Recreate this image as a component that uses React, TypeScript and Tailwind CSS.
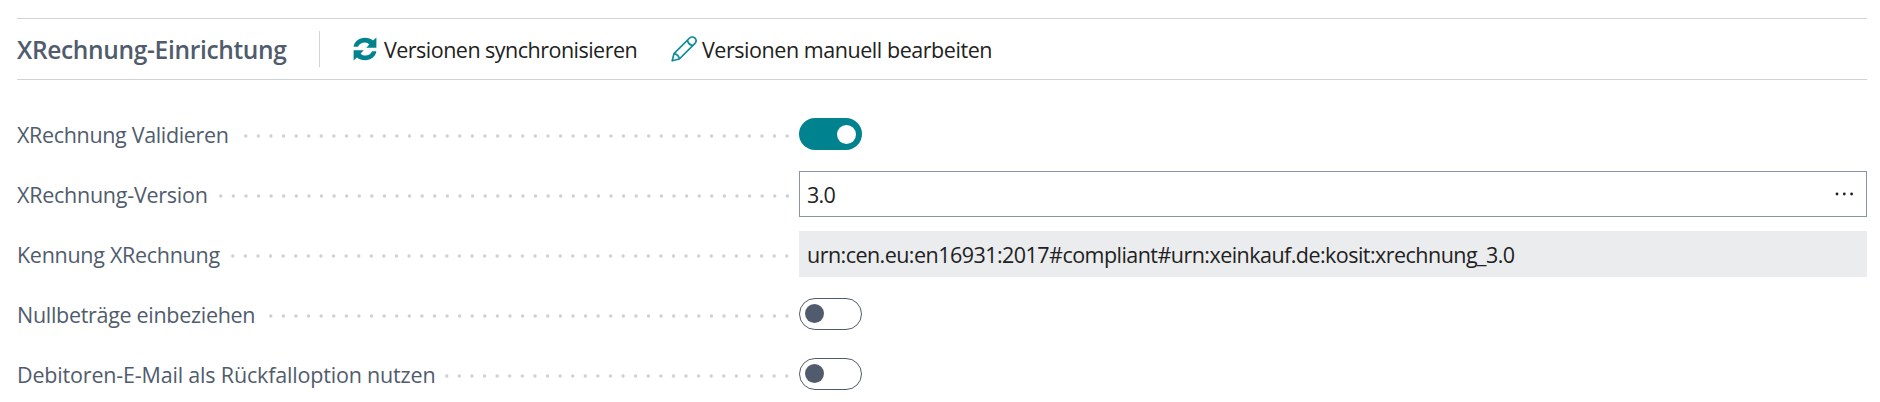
import type { ReactNode } from "react";

function SyncIcon() {
  return (
    <svg className="h-6 w-6 shrink-0" viewBox="0 0 24 24" fill="#00838f">
      <path d="M.6 9.800C1.500 4.300 6 .8 12 .8c3.200 0 5.800.9 8 2.700L23.400.6V10.800H13.200l3.200-3.200C15.200 6.200 13.800 5.400 12 5.400c-3.500 0-6 1.600-7 4.400z" />
      <path d="M23.400 14.200C22.500 19.700 18 23.200 12 23.200c-3.200 0-5.800-.9-8-2.700L.6 23.400V13.200H10.800l-3.200 3.200c1.200 1.400 2.600 2.200 4.400 2.200 3.500 0 6-1.600 7-4.400z" />
    </svg>
  );
}

function PencilIcon() {
  return (
    <svg className="h-[26px] w-[26px] shrink-0" viewBox="0 0 26 26" fill="none" stroke="#0d8c97" strokeWidth="1.7" strokeLinejoin="round">
      <path d="M1.200 24.800 3 17.600 18.600 2C20 .7 22.400.7 23.900 2c1.400 1.500 1.400 3.800.1 5.300L8.300 23z" />
      <path d="M16.400 4.200c.6 2.800 2.500 4.700 5.300 5.300M3 17.600c2.900.4 4.900 2.400 5.300 5.400" />
    </svg>
  );
}

function Toggle({ on = false }: { on?: boolean }) {
  return (
    <button
      role="switch"
      aria-checked={on}
      className={
        on
          ? "flex h-8 w-[63px] items-center justify-end rounded-full bg-[#00838f] pr-1.5"
          : "flex h-8 w-[63px] items-center rounded-full border border-[#505c6d] bg-white pb-px pl-[5px]"
      }
    >
      <span className={on ? "h-[19px] w-[19px] rounded-full bg-white" : "h-[19px] w-[19px] rounded-full bg-[#505c6d]"} />
    </button>
  );
}

function Leader({ count }: { count: number }) {
  return (
    <svg className="mr-[10px] h-1 shrink-0" width={count * 12.59} height="4">
      {Array.from({ length: count }, (_, i) => (
        <circle key={i} cx={count * 12.59 - 1.8 - i * 12.59} cy="2" r="1.7" fill="#cdd0d5" />
      ))}
    </svg>
  );
}

function Row({ label, tracking, dots, children }: { label: string; tracking: string; dots: number; children: ReactNode }) {
  return (
    <div className="flex h-[60px] items-center">
      <div className="flex w-[782px] shrink-0 items-center justify-between">
        <span className={`whitespace-nowrap pt-0.5 text-[21.5px] leading-[30px] text-[#505c6d] ${tracking}`}>{label}</span>
        <div className="pt-1">
          <Leader count={dots} />
        </div>
      </div>
      <div className="flex grow">{children}</div>
    </div>
  );
}

export default function App() {
  return (
    <div className="h-[402px] bg-white pl-[17px] pr-[13px] pt-[18px] font-['Open_Sans','Noto_Sans',sans-serif]">
      <header className="flex h-[62px] items-center border-y border-[#d0d2d6]">
        <h2 className="w-[302px] whitespace-nowrap pt-0.5 text-[24.5px] font-semibold leading-8 tracking-[-0.33px] text-[#505c6d]">
          XRechnung-Einrichtung
        </h2>
        <div className="h-9 w-px bg-[#d0d2d6]" />
        <button className="ml-[33px] flex items-center gap-[7px] text-[21.5px] leading-[30px] text-[#212121]">
          <SyncIcon />
          <span className="w-[254px] whitespace-nowrap pt-0.5 text-left tracking-[-0.52px]">Versionen synchronisieren</span>
        </button>
        <button className="ml-[33px] flex items-center gap-[5px] text-[21.5px] leading-[30px] text-[#212121]">
          <PencilIcon />
          <span className="whitespace-nowrap pt-0.5 tracking-[-0.45px]">Versionen manuell bearbeiten</span>
        </button>
      </header>
      <main className="pt-6">
        <Row label="XRechnung Validieren" tracking="tracking-[-0.34px]" dots={44}>
          <Toggle on />
        </Row>
        <Row label="XRechnung-Version" tracking="tracking-[-0.25px]" dots={46}>
          <div className="flex h-[46px] grow items-center justify-between border border-[#8b94a3] pl-[7px] pr-[13px] text-[21.5px] text-[#212121]">
            <span className="pt-0.5 tracking-[-0.7px]">3.0</span>
            <svg width="18" height="4" fill="#212121">
              <circle cx="2" cy="2" r="1.400" />
              <circle cx="9.300" cy="2" r="1.400" />
              <circle cx="16.600" cy="2" r="1.400" />
            </svg>
          </div>
        </Row>
        <Row label="Kennung XRechnung" tracking="tracking-[-0.29px]" dots={45}>
          <div className="flex h-[46px] grow items-center bg-[#ebecee] pl-2 text-[21.5px] text-[#212121]">
            <span className="whitespace-nowrap pt-0.5 tracking-[-0.54px]">
              urn:cen.eu:en16931:2017#compliant#urn:xeinkauf.de:kosit:xrechnung_3.0
            </span>
          </div>
        </Row>
        <Row label="Nullbeträge einbeziehen" tracking="tracking-[-0.3px]" dots={42}>
          <Toggle />
        </Row>
        <Row label="Debitoren-E-Mail als Rückfalloption nutzen" tracking="tracking-[-0.18px]" dots={28}>
          <Toggle />
        </Row>
      </main>
    </div>
  );
}
